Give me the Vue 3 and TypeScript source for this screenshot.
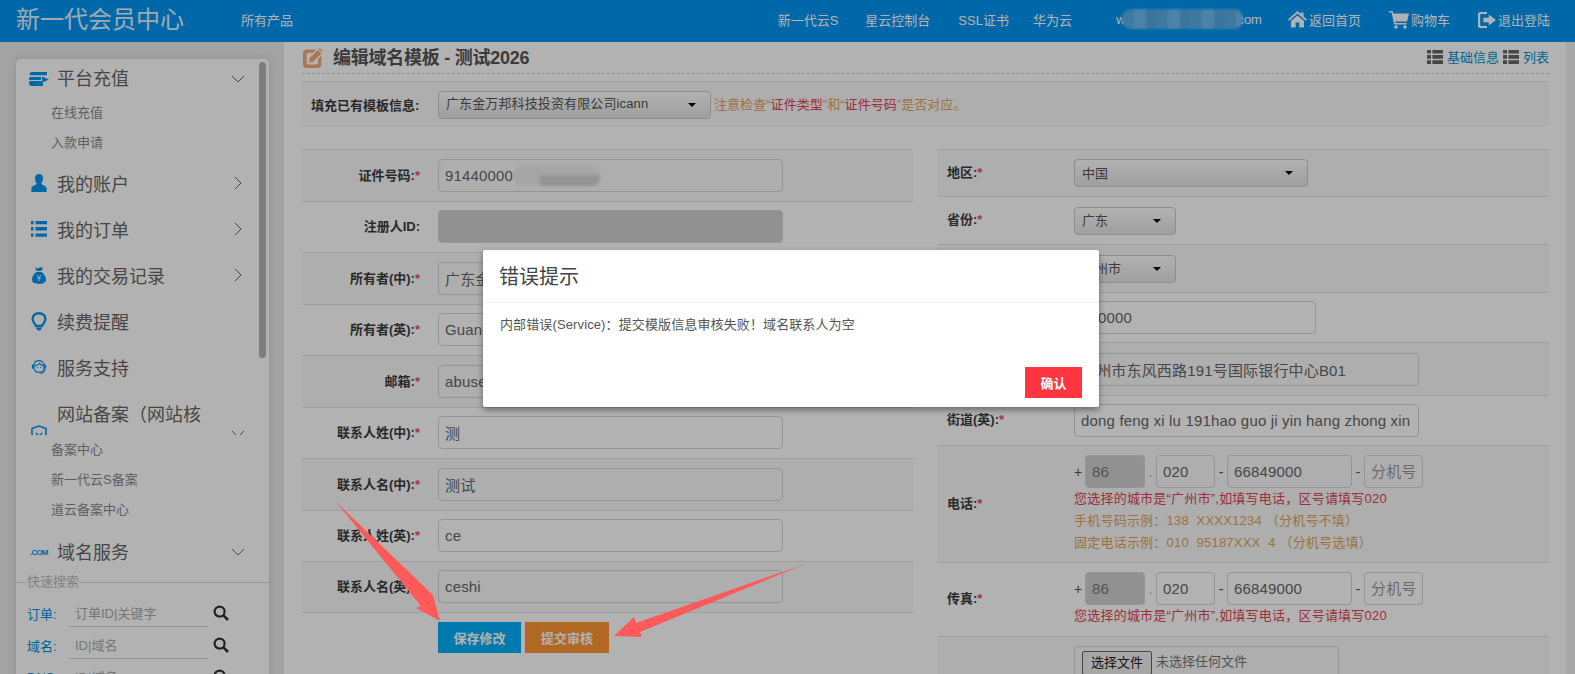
<script setup lang="ts">
const leftRows = [
  { label: "证件号码", req: true, value: "91440000", blur: true },
  { label: "注册人ID", req: false, value: "", disabled: true },
  { label: "所有者(中)", req: true, value: "广东金万邦科技投资有限公司" },
  { label: "所有者(英)", req: true, value: "Guangdong Jinwanbang" },
  { label: "邮箱", req: true, value: "abuse@example.com" },
  { label: "联系人姓(中)", req: true, value: "测" },
  { label: "联系人名(中)", req: true, value: "测试" },
  { label: "联系人姓(英)", req: true, value: "ce" },
  { label: "联系人名(英)", req: true, value: "ceshi" },
]
const cityHint = "您选择的城市是“广州市”,如填写电话，区号请填写020"
</script>

<template>
  <div class="page">
    <header class="top">
      <div class="logo">新一代会员中心</div>
      <a class="all">所有产品</a>
      <nav class="nav">
        <a>新一代云S</a>
        <a class="star">星云控制台</a>
        <a class="ssl">SSL证书</a>
        <a class="hw">华为云</a>
        <span class="mail">w<i class="mailBlur"></i><em>.com</em></span>
        <a class="iconLink home">
          <svg width="19" height="17" viewBox="0 0 19 17"><path fill="currentColor" d="M9.5 0 L13 3 V1.5 H15.5 V5.2 L19 8.4 L17.8 9.7 L9.5 2.6 L1.2 9.7 L0 8.4 Z M3 10 L9.5 4.5 L16 10 V16.5 H11.3 V11.5 H7.7 V16.5 H3 Z"/></svg>
          返回首页
        </a>
        <a class="iconLink cart">
          <svg width="20" height="18" viewBox="0 0 20 18"><path fill="currentColor" d="M0 0 H3.6 L4.3 2.4 H20 L18 10.4 H6.2 L6.6 12 H17.6 V13.4 H5.2 L2.6 1.5 H0 Z"/><circle fill="currentColor" cx="7" cy="16" r="1.8"/><circle fill="currentColor" cx="16" cy="16" r="1.8"/></svg>
          购物车
        </a>
        <a class="iconLink out">
          <svg width="18" height="18" viewBox="0 0 20 18"><path fill="currentColor" d="M3 0 H10 V2.4 H3.4 Q2.4 2.4 2.4 3.4 V14.6 Q2.4 15.6 3.4 15.6 H10 V18 H3 Q0 18 0 15 V3 Q0 0 3 0 Z M12 3 L20 9 L12 15 V11.4 H6 V6.6 H12 Z"/></svg>
          退出登陆
        </a>
      </nav>
    </header>

    <div class="body">
      <aside class="side">
        <div class="panel">
          <div class="thumb"></div>

          <div class="item first">
            <svg class="ico" width="20" height="14" viewBox="0 0 20 14"><path fill="currentColor" d="M3 0 H18 V3.2 H0.5 Q0.5 0 3 0 Z M1 5 H12 V8 H0 Q0 5.6 1 5 Z M13 4.5 L20 7.6 L14.5 10 H14 V9 H1 Q0 9.4 0 11 Q0 14 3 14 H14 V10.5 L13 9 Z"/></svg>
            <span class="name">平台充值</span>
            <svg class="chev" width="14" height="8" viewBox="0 0 14 8"><path d="M1 1 L7 7 L13 1" fill="none" stroke="currentColor"/></svg>
          </div>
          <a class="sub">在线充值</a>
          <a class="sub">入款申请</a>

          <div class="item gapTop">
            <svg class="ico" width="20" height="18" viewBox="0 0 20 18"><path fill="currentColor" d="M10 0 C13 0 14 2.2 14 4.6 C14 7 13 8.6 12.3 9.6 C12.3 11 16.8 11.6 17.6 14 V18 H2.4 V14 C3.2 11.6 7.7 11 7.7 9.6 C7 8.6 6 7 6 4.6 C6 2.2 7 0 10 0 Z"/></svg>
            <span class="name">我的账户</span>
            <svg class="chev" width="8" height="14" viewBox="0 0 8 14"><path d="M1 1 L7 7 L1 13" fill="none" stroke="currentColor"/></svg>
          </div>
          <div class="item">
            <svg class="ico" width="20" height="16" viewBox="0 0 20 16"><path fill="currentColor" d="M2 0 H4.5 V3.2 H2 Z M6.5 0 H18 V3.2 H6.5 Z M2 6 H4.5 V9.6 H2 Z M6.5 6 H18 V9.6 H6.5 Z M2 12.4 H4.5 V15.8 H2 Z M6.5 12.4 H18 V15.8 H6.5 Z"/></svg>
            <span class="name">我的订单</span>
            <svg class="chev" width="8" height="14" viewBox="0 0 8 14"><path d="M1 1 L7 7 L1 13" fill="none" stroke="currentColor"/></svg>
          </div>
          <div class="item">
            <svg class="ico" width="20" height="17" viewBox="0 0 20 17"><path fill="currentColor" d="M6 0 L9 1.4 L11 0.2 L14 0.6 L12.4 4 H7.6 Z M7.4 5 H12.6 C15.4 7 17 10 17 12.6 C17 15.6 14.6 17 10 17 C5.4 17 3 15.6 3 12.6 C3 10 4.6 7 7.4 5 Z"/><path d="M8 8 L10 10.5 L12 8 M10 10.5 V14 M8.2 11.4 H11.8" fill="none" stroke="#fff" stroke-width=".9"/></svg>
            <span class="name">我的交易记录</span>
            <svg class="chev" width="8" height="14" viewBox="0 0 8 14"><path d="M1 1 L7 7 L1 13" fill="none" stroke="currentColor"/></svg>
          </div>
          <div class="item">
            <svg class="ico" width="20" height="19" viewBox="0 0 20 19"><path d="M10 1.2 C14 1.2 16.4 4 16.4 7 C16.4 10 14 11.4 13 14 H7 C6 11.4 3.6 10 3.6 7 C3.6 4 6 1.2 10 1.2 Z" fill="none" stroke="currentColor" stroke-width="2.4"/><path d="M7.4 15.6 H12.6 V17 L11 18.6 H9 L7.4 17 Z" fill="currentColor"/></svg>
            <span class="name">续费提醒</span>
          </div>
          <div class="item">
            <svg class="ico" width="20" height="16" viewBox="0 0 20 16"><path d="M5 9 V6.5 C5 3.4 7.2 1.6 10 1.6 C12.8 1.6 15 3.4 15 6.5 V9 C15 11.8 12.6 13.4 10 13.4 C7.4 13.4 5 11.8 5 9 Z M5.4 6.6 C7.6 6.6 9.4 5.8 10.6 4.4 C11.4 5.6 13 6.4 14.6 6.6" fill="none" stroke="currentColor" stroke-width="1.1"/><path d="M3.2 5.6 H4.8 V9.8 H3.2 Q2.4 7.7 3.2 5.6 Z M15.2 5.6 H16.8 Q17.6 7.7 16.8 9.8 H15.2 Z" fill="currentColor"/><path d="M16 10 Q15.4 14 11.4 14.4" fill="none" stroke="currentColor" stroke-width="1.2"/><circle cx="8.2" cy="8.6" r=".7" fill="currentColor"/><circle cx="11.8" cy="8.6" r=".7" fill="currentColor"/></svg>
            <span class="name">服务支持</span>
          </div>
          <div class="item clipped">
            <svg class="ico" width="20" height="18" viewBox="0 0 20 18"><path d="M10 1 L17 3.6 V9 C17 13 13.5 15.6 10 17 C6.5 15.6 3 13 3 9 V3.6 Z" fill="none" stroke="currentColor" stroke-width="1.6"/><path d="M6.8 8 L10 11 L13.2 8" fill="none" stroke="currentColor" stroke-width="1.4"/></svg>
            <span class="name wrap">网站备案（网站核验）</span>
            <svg class="chev" width="14" height="8" viewBox="0 0 14 8"><path d="M1 1 L7 7 L13 1" fill="none" stroke="currentColor"/></svg>
          </div>
          <a class="sub">备案中心</a>
          <a class="sub">新一代云S备案</a>
          <a class="sub">道云备案中心</a>

          <div class="item gapTopSm">
            <span class="ico com">.COM</span>
            <span class="name">域名服务</span>
            <svg class="chev" width="14" height="8" viewBox="0 0 14 8"><path d="M1 1 L7 7 L13 1" fill="none" stroke="currentColor"/></svg>
          </div>

          <fieldset class="quick">
            <legend>快速搜索</legend>
            <div class="qRow">
              <label>订单:</label>
              <input placeholder="订单ID|关键字" />
              <svg width="16" height="16" viewBox="0 0 16 16"><circle cx="6.6" cy="6.6" r="5" fill="none" stroke="currentColor" stroke-width="2.2"/><path d="M10.4 10.4 L15 15" stroke="currentColor" stroke-width="2.6"/></svg>
            </div>
            <div class="qRow">
              <label>域名:</label>
              <input placeholder="ID|域名" />
              <svg width="16" height="16" viewBox="0 0 16 16"><circle cx="6.6" cy="6.6" r="5" fill="none" stroke="currentColor" stroke-width="2.2"/><path d="M10.4 10.4 L15 15" stroke="currentColor" stroke-width="2.6"/></svg>
            </div>
            <div class="qRow">
              <label>DNS:</label>
              <input placeholder="ID|域名" />
              <svg width="16" height="16" viewBox="0 0 16 16"><circle cx="6.6" cy="6.6" r="5" fill="none" stroke="currentColor" stroke-width="2.2"/><path d="M10.4 10.4 L15 15" stroke="currentColor" stroke-width="2.6"/></svg>
            </div>
          </fieldset>
        </div>
      </aside>

      <main class="main">
        <div class="titleBar">
          <svg width="20" height="20" viewBox="0 0 20 20"><path fill="#f2ab7c" d="M3.6 1.6 H13 L9.6 5 H5 Q3.6 5 3.6 6.4 V15 Q3.6 16.4 5 16.4 H13.6 Q15 16.4 15 15 V11 L18.4 7.6 V16 Q18.4 20 14.4 20 H3.6 Q0 20 0 16 V5.4 Q0 1.6 3.6 1.6 Z M14.8 2 L18.4 5.6 L10.4 13.6 L6.2 14.4 L6.8 10 Z M16 .6 Q16.6 0 17.2 .6 L19.6 3 Q20 3.6 19.6 4.2 L19.2 4.6 L15.4 1 Z"/></svg>
          <h1>编辑域名模板 - 测试2026</h1>
          <div class="links">
            <svg width="16" height="14" viewBox="0 0 16 14"><path fill="#666" d="M0 0 H4 V3.6 H0 Z M5.4 0 H16 V3.6 H5.4 Z M0 5 H4 V8.8 H0 Z M5.4 5 H16 V8.8 H5.4 Z M0 10.2 H4 V14 H0 Z M5.4 10.2 H16 V14 H5.4 Z"/></svg>
            <a>基础信息</a>
            <svg width="16" height="14" viewBox="0 0 16 14"><path fill="#666" d="M0 0 H4 V3.6 H0 Z M5.4 0 H16 V3.6 H5.4 Z M0 5 H4 V8.8 H0 Z M5.4 5 H16 V8.8 H5.4 Z M0 10.2 H4 V14 H0 Z M5.4 10.2 H16 V14 H5.4 Z"/></svg>
            <a>列表</a>
          </div>
        </div>

        <div class="strip">
          <label>填充已有模板信息:</label>
          <div class="select fillSel"><span>广东金万邦科技投资有限公司icann</span><i class="caret"></i></div>
          <span class="note">注意检查“<b>证件类型</b>”和“<b>证件号码</b>”是否对应。</span>
        </div>

        <div class="columns">
          <div class="col">
            <div class="rows">
              <div v-for="r in leftRows" :key="r.label" class="row leftRow">
                <label class="leftLabel">{{ r.label }}:<s v-if="r.req">*</s></label>
                <div class="inputWrap">
                  <input class="text" :class="{ off: r.disabled }" :value="r.value" :disabled="r.disabled" readonly />
                  <i v-if="r.blur" class="idBlur"></i>
                </div>
              </div>
            </div>
            <div class="actions">
              <button class="save">保存修改</button>
              <button class="submit">提交审核</button>
            </div>
          </div>

          <div class="col rows">
            <div class="row r47"><label class="rightLabel">地区:<s>*</s></label><div class="select region"><span>中国</span><i class="caret"></i></div></div>
            <div class="row r48"><label class="rightLabel">省份:<s>*</s></label><div class="select short"><span>广东</span><i class="caret"></i></div></div>
            <div class="row r48"><label class="rightLabel">城市:<s>*</s></label><div class="select short"><span>广州市</span><i class="caret"></i></div></div>
            <div class="row r50"><label class="rightLabel">邮编:<s>*</s></label><input class="text zip" value="510000" readonly /></div>
            <div class="row r53"><label class="rightLabel">街道(中):<s>*</s></label><input class="text street" value="广州市东风西路191号国际银行中心B01" readonly /></div>
            <div class="row r50"><label class="rightLabel">街道(英):<s>*</s></label><input class="text street" value="dong feng xi lu 191hao guo ji yin hang zhong xin" readonly /></div>
            <div class="row telRow">
              <label class="rightLabel">电话:<s>*</s></label>
              <div class="telBox">
                <div class="telLine">
                  <span class="plus">+</span><input class="text cc off" value="86" disabled />
                  <span class="dot">.</span><input class="text area" value="020" readonly />
                  <span class="dash">-</span><input class="text num" value="66849000" readonly />
                  <span class="dash">-</span><input class="text ext" placeholder="分机号" readonly />
                </div>
                <p class="red">{{ cityHint }}</p>
                <p class="tan">手机号码示例：138&nbsp; XXXX1234 （分机号不填）</p>
                <p class="tan">固定电话示例：010&nbsp; 95187XXX&nbsp; 4 （分机号选填）</p>
              </div>
            </div>
            <div class="row faxRow">
              <label class="rightLabel">传真:<s>*</s></label>
              <div class="telBox">
                <div class="telLine">
                  <span class="plus">+</span><input class="text cc off" value="86" disabled />
                  <span class="dot">.</span><input class="text area" value="020" readonly />
                  <span class="dash">-</span><input class="text num" value="66849000" readonly />
                  <span class="dash">-</span><input class="text ext" placeholder="分机号" readonly />
                </div>
                <p class="red">{{ cityHint }}</p>
              </div>
            </div>
            <div class="row fileRow">
              <label class="rightLabel"></label>
              <div class="file"><span class="fileBtn">选择文件</span><span>未选择任何文件</span></div>
            </div>
          </div>
        </div>
      </main>
      <div class="track"></div>
    </div>

    <div class="backdrop"></div>
    <section class="modal">
      <div class="modalHead">错误提示</div>
      <div class="modalBody">内部错误(Service)：提交模版信息审核失败！域名联系人为空</div>
      <div class="modalFoot"><button>确认</button></div>
    </section>

    <svg class="arrows" width="1575" height="674" viewBox="0 0 1575 674">
      <path fill="#ff5a5a" d="M336 502 L433 595 L440 621 L416 608 L421 606 Z" />
      <path fill="#ff5a5a" d="M805 564 L636 623 L634 617 L614 636 L642 637 L640 632 Z" />
    </svg>
  </div>
</template>

<style scoped>
.page {
  position: relative;
  width: 1575px;
  height: 674px;
  overflow: hidden;
  background: #fff;
  font-family: "Liberation Sans", "Noto Sans CJK SC", sans-serif;
  font-size: 13px;
  color: #444;
}

.top {
  height: 42px;
  background: #0096f3;
  color: #fff;
  display: flex;
  align-items: center;
  padding-left: 16px;
  padding-right: 25px;
}
.logo {
  font-size: 24px;
  line-height: 42px;
  margin-top: -3px;
  color: #e4f4ff;
}
.all {
  margin-left: 57px;
  margin-top: -3px;
}
.nav {
  margin-left: auto;
  display: flex;
  align-items: center;
  margin-top: -3px;
}
.star { margin-left: 27px; }
.ssl { margin-left: 28px; }
.hw { margin-left: 24px; }
.mail {
  width: 146px;
  margin-left: 44px;
  position: relative;
  display: flex;
  justify-content: space-between;
}
.mail em {
  font-style: normal;
}
.mailBlur {
  position: absolute;
  left: 6px;
  top: -3px;
  width: 121px;
  height: 20px;
  border-radius: 9px;
  background: repeating-linear-gradient(90deg, #5aaee8 0 12px, #6cbcf2 12px 24px, #54a8e4 24px 34px);
  filter: blur(1px);
}
.iconLink {
  display: flex;
  align-items: center;
  gap: 2px;
}
.home {
  margin-left: 26px;
}
.cart {
  margin-left: 28px;
}
.out {
  margin-left: 28px;
}

.body {
  display: flex;
  height: 632px;
}
.side {
  width: 284px;
  flex: none;
  background: #eaeaea;
  padding: 17px 15px 0 16px;
  box-sizing: border-box;
  overflow: hidden;
}
.panel {
  position: relative;
  background: #fff;
  border-radius: 5px;
  height: 700px;
  box-shadow: 0 0 8px rgba(0, 0, 0, .12);
}
.thumb {
  position: absolute;
  left: 243px;
  top: 3px;
  width: 7px;
  height: 296px;
  border-radius: 4px;
  background: #b5b5b5;
}
.item {
  height: 46px;
  display: flex;
  align-items: center;
  font-size: 18px;
  color: #666;
  position: relative;
}
.item.first {
  height: 39px;
}
.first .name {
  margin-top: -3px;
}
.gapTop {
  margin-top: 2px;
}
.gapTopSm {
  margin-top: 4px;
}
.gapTop .name {
  margin-top: -1px;
}
.gapTopSm .name {
  margin-top: -2px;
}
.ico {
  margin-left: 13px;
  width: 20px;
  flex: none;
  color: #0096f0;
}
.com {
  font-size: 8px;
  font-weight: bold;
  margin-left: 14px;
  letter-spacing: -.8px;
  margin-right: -1px;
  white-space: nowrap;
}
.name {
  margin-left: 8px;
}
.chev {
  position: absolute;
  right: 24px;
  top: 50%;
  margin-top: -4px;
  color: #666;
}
.chev[width="8"] {
  right: 27px;
  margin-top: -7px;
}
.item.clipped {
  height: 45px;
  overflow: hidden;
  align-items: flex-start;
}
.clipped .ico {
  margin-top: 35px;
}
.clipped .chev {
  top: auto;
  margin-top: 0;
  bottom: -3px;
}
.wrap {
  width: 150px;
  line-height: 47px;
  margin-top: 2px;
  margin-left: 8px;
}
.sub {
  display: block;
  height: 30px;
  line-height: 30px;
  padding-left: 35px;
  color: #8a8a8a;
}
.quick {
  margin: 0;
  padding: 0;
  border: 0;
  border-top: 1px solid #d8d8d8;
  min-width: 0;
  margin-top: -1px;
}
.quick legend {
  margin-left: 11px;
  padding: 0;
  color: #bbb;
  line-height: 16px;
}
.qRow {
  height: 32px;
  display: flex;
  align-items: center;
  position: relative;
  top: 7px;
}
.qRow label {
  width: 53px;
  padding-left: 11px;
  box-sizing: border-box;
  color: #0090d8;
}
.qRow input {
  width: 139px;
  height: 25px;
  box-sizing: border-box;
  border: 0;
  border-bottom: 1px solid #d6d6d6;
  padding: 0 6px;
  background: transparent;
  font: inherit;
  margin-top: 2px;
}
.qRow input::placeholder {
  color: #aaa;
}
.qRow svg {
  margin-left: 5px;
  color: #333;
}

.main {
  flex: 1;
  min-width: 0;
  padding: 0 17px 0 18px;
  overflow: hidden;
}
.titleBar {
  height: 32px;
  box-sizing: border-box;
  border-bottom: 1px dashed #cfcfcf;
  display: flex;
  align-items: center;
  padding-left: 1px;
  gap: 10px;
}
.titleBar h1 {
  margin: 0;
  font-size: 18px;
  line-height: 30px;
  letter-spacing: -.25px;
  color: #555;
}
.links {
  margin-left: auto;
  display: flex;
  align-items: center;
  gap: 4px;
  margin-top: -2px;
}
.links a {
  color: #0091cc;
}
.strip {
  margin-top: 7px;
  height: 46px;
  box-sizing: border-box;
  border-top: 1px solid #e2e2e2;
  background: #f9f9f9;
  display: flex;
  align-items: center;
  padding-left: 9px;
}
.strip label {
  width: 127px;
  margin-top: -1px;
  font-weight: bold;
  color: #3c3c3c;
}
.select {
  height: 28px;
  box-sizing: border-box;
  padding: 0 14px 2px 7px;
  border: 1px solid #ccc;
  border-radius: 4px;
  background: linear-gradient(#fff, #e4e4e4);
  display: flex;
  align-items: center;
  justify-content: space-between;
  color: #555;
  flex: none;
}
.fillSel {
  width: 273px;
  padding-bottom: 4px;
  letter-spacing: .12px;
}
.caret {
  width: 0;
  height: 0;
  border-left: 4px solid transparent;
  border-right: 4px solid transparent;
  border-top: 4px solid #000;
  margin-top: 2px;
}
.fillSel .caret {
  margin-top: 4px;
}
.note {
  margin-left: 3px;
  margin-top: -3px;
  letter-spacing: .05px;
  color: #dfa55c;
}
.note b {
  font-weight: normal;
  color: #dc4454;
}

.columns {
  display: grid;
  grid-template-columns: 611px 611px;
  column-gap: 25px;
  margin-top: 22px;
}
.rows {
  display: flex;
  flex-direction: column;
}
.row {
  box-sizing: border-box;
  border-top: 1px solid #e2e2e2;
  display: flex;
  align-items: center;
  flex: none;
}
.rows .row:nth-child(odd) {
  background: #f9f9f9;
}
.leftRow {
  height: 51.5px;
}
.leftRow:last-child {
  border-bottom: 1px solid #e2e2e2;
}
.leftLabel {
  width: 118px;
  margin-right: 18px;
  margin-top: -2px;
  text-align: right;
  font-weight: bold;
  color: #3c3c3c;
  white-space: nowrap;
}
.leftLabel s, .rightLabel s {
  text-decoration: none;
  color: #ee4a5a;
}
.inputWrap {
  position: relative;
  width: 345px;
}
.text {
  display: block;
  box-sizing: border-box;
  height: 33px;
  width: 345px;
  padding: 0 6px;
  border: 1px solid #d6d6d6;
  border-radius: 4px;
  background: transparent;
  font: 15px "Liberation Sans", "Noto Sans CJK SC", sans-serif;
  letter-spacing: .17px;
  color: #666;
  flex: none;
}
.text.off {
  background: #d0d0d0;
  color: #777;
  -webkit-text-fill-color: #777;
  opacity: 1;
}
.idBlur {
  position: absolute;
  left: 76px;
  top: 7px;
  width: 86px;
  height: 20px;
  border-radius: 8px;
  background: linear-gradient(90deg, #ededed 0 30%, transparent 30%), linear-gradient(#eeeeee 0 45%, #d4d4d4 45%);
  filter: blur(1.5px);
}

.actions {
  display: flex;
  gap: 4px;
  padding: 9px 0 0 136px;
}
.actions button {
  height: 31px;
  border: 0;
  padding: 0;
  color: #fff;
  font: bold 13px "Liberation Sans", "Noto Sans CJK SC", sans-serif;
}
.save {
  width: 83px;
  background: #00affa;
}
.submit {
  width: 84px;
  background: #fd9532;
}

.r47 { height: 47px; }
.r48 { height: 48px; }
.r50 { height: 50px; }
.r53 { height: 53px; }
.rightLabel {
  width: 136px;
  padding-left: 9px;
  margin-top: -4px;
  box-sizing: border-box;
  font-weight: bold;
  color: #3c3c3c;
  flex: none;
  white-space: nowrap;
}
.region {
  width: 234px;
}
.short {
  width: 102px;
}
.zip {
  width: 242px;
}
.street {
  width: 345px;
}
.telRow {
  height: 117px;
  align-items: center;
}
.faxRow {
  height: 74px;
}
.fileRow {
  height: 60px;
  align-items: flex-start;
  padding-top: 9px;
}
.telBox {
  flex: none;
  align-self: flex-start;
  padding-top: 9px;
}
.telLine {
  display: flex;
  align-items: center;
  height: 33px;
  color: #555;
  font-size: 14px;
}
.plus {
  width: 11px;
}
.dot {
  width: 11px;
  text-align: center;
  color: #aaa;
}
.dash {
  width: 12px;
  text-align: center;
}
.cc {
  width: 60px;
}
.area {
  width: 59px;
}
.num {
  width: 125px;
}
.ext {
  width: 59px;
  padding: 0 6px;
}
.text::placeholder {
  color: #999;
  font-size: 15px;
}
.red, .tan {
  margin: 0;
  line-height: 22px;
  font-size: 13px;
  letter-spacing: .22px;
}
.red {
  color: #dc4454;
}
.tan {
  color: #dfa55c;
}
.file {
  width: 265px;
  height: 60px;
  box-sizing: border-box;
  border: 1px solid #d6d6d6;
  border-radius: 4px;
  padding: 4px 7px;
  display: flex;
  align-items: flex-start;
  gap: 4px;
  color: #777;
  line-height: 22px;
}
.fileBtn {
  display: block;
  width: 70px;
  height: 24px;
  box-sizing: border-box;
  border: 1px solid #666;
  border-radius: 2px;
  background: #efefef;
  color: #222;
  text-align: center;
}
.track {
  width: 9px;
  flex: none;
  background: #f1f1f1;
}

.backdrop {
  position: absolute;
  inset: 0;
  background: rgba(0, 0, 0, .3);
}
.modal {
  position: absolute;
  left: 483px;
  top: 250px;
  width: 616px;
  height: 157px;
  background: #fff;
  border-radius: 2px;
  box-shadow: 0 3px 6px rgba(0, 0, 0, .4);
  display: flex;
  flex-direction: column;
}
.modalHead {
  height: 53px;
  box-sizing: border-box;
  border-bottom: 1px solid #eee;
  padding-left: 16px;
  font-size: 20px;
  line-height: 54px;
  color: #444;
}
.modalBody {
  padding: 12px 0 0 17px;
  line-height: 20px;
  letter-spacing: .12px;
  color: #555;
}
.modalFoot {
  margin-top: auto;
  padding: 0 17px 9px 0;
  display: flex;
  justify-content: flex-end;
}
.modalFoot button {
  width: 57px;
  height: 31px;
  border: 0;
  padding: 0;
  background: #ff3640;
  color: #fff;
  font: bold 13px "Liberation Sans", "Noto Sans CJK SC", sans-serif;
}
.arrows {
  position: absolute;
  left: 0;
  top: 0;
  pointer-events: none;
}
</style>

<style>
html, body {
  margin: 0;
  overflow: hidden;
}
</style>
